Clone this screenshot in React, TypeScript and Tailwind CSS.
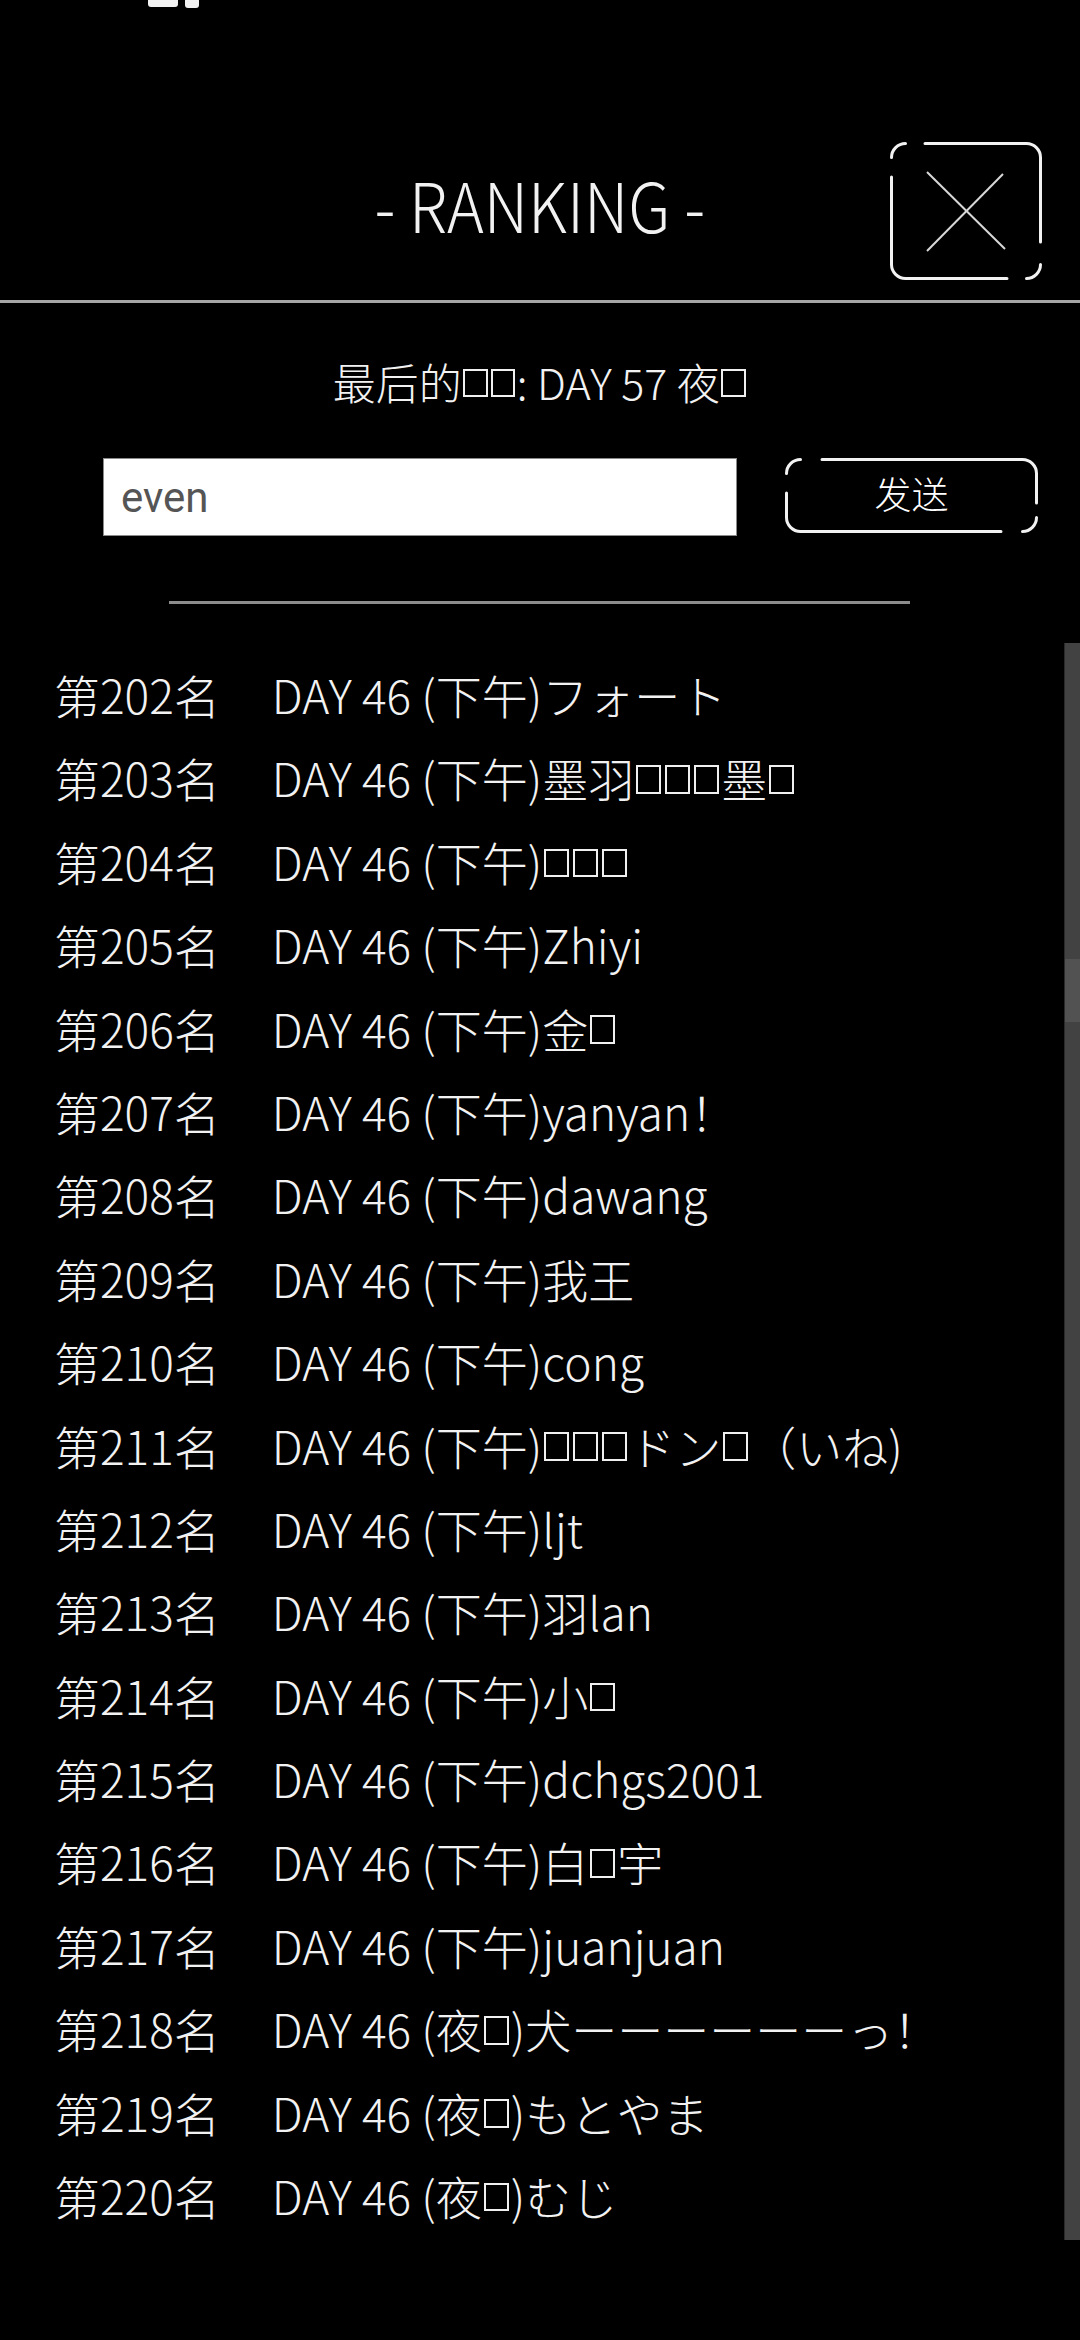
import React from 'react'

type Row = {
  rank: number
  time: string
  name: string
}

const rows: Row[] = [
  { rank: 202, time: '下午', name: 'フォート' },
  { rank: 203, time: '下午', name: '墨羽□□□墨□' },
  { rank: 204, time: '下午', name: '□□□' },
  { rank: 205, time: '下午', name: 'Zhiyi' },
  { rank: 206, time: '下午', name: '金□' },
  { rank: 207, time: '下午', name: 'yanyan！' },
  { rank: 208, time: '下午', name: 'dawang' },
  { rank: 209, time: '下午', name: '我王' },
  { rank: 210, time: '下午', name: 'cong' },
  { rank: 211, time: '下午', name: '□□□ドン□（いね)' },
  { rank: 212, time: '下午', name: 'ljt' },
  { rank: 213, time: '下午', name: '羽lan' },
  { rank: 214, time: '下午', name: '小□' },
  { rank: 215, time: '下午', name: 'dchgs2001' },
  { rank: 216, time: '下午', name: '白□宇' },
  { rank: 217, time: '下午', name: 'juanjuan' },
  { rank: 218, time: '夜□', name: '犬ーーーーーーっ！' },
  { rank: 219, time: '夜□', name: 'もとやま' },
  { rank: 220, time: '夜□', name: 'むじ' },
]

// missing glyph box, the game font has no glyph for these characters
function Tofu({ big = false }: { big?: boolean }) {
  return (
    <span
      className={
        big
          ? 'mx-[0.04em] mb-[0.06em] inline-block h-[0.66em] w-[0.56em] border-2 border-[#f0f0f0] align-baseline'
          : 'mx-[0.04em] mb-[0.08em] inline-block h-[0.62em] w-[0.55em] border-2 border-[#f0f0f0] align-baseline'
      }
    />
  )
}

function withTofu(text: string) {
  const parts = text.split('□')
  return parts.map((part, i) => (
    <React.Fragment key={i}>
      {part}
      {i < parts.length - 1 && <Tofu />}
    </React.Fragment>
  ))
}

function CloseButton() {
  return (
    <button type="button" className="block h-[138px] w-[152px]">
      <svg width="152" height="138" viewBox="0 0 152 138" fill="none">
        <g stroke="#f2f2f2" strokeWidth="3" strokeLinecap="round">
          <path d="M35 1.5 H136.5 A14 14 0 0 1 150.5 15.5 V100" />
          <path d="M117 136.5 H15.5 A14 14 0 0 1 1.5 122.5 V35" />
          <path d="M1.5 15.5 A14 14 0 0 1 15.5 1.5" />
          <path d="M150.5 122.5 A14 14 0 0 1 136.5 136.5" />
        </g>
        <g stroke="#d8d8d8" strokeWidth="2">
          <path d="M37 30 L115 107" />
          <path d="M113 32 L37 109" />
        </g>
      </svg>
    </button>
  )
}

function SendButton() {
  return (
    <button
      type="button"
      className="relative flex h-[75px] w-[253px] items-center justify-center text-[37px] leading-none text-white"
    >
      <svg
        className="absolute inset-0"
        width="253"
        height="75"
        viewBox="0 0 253 75"
        fill="none"
      >
        <g stroke="#f2f2f2" strokeWidth="3" strokeLinecap="round">
          <path d="M37 1.5 H237.5 A14 14 0 0 1 251.5 15.5 V45" />
          <path d="M216 73.5 H15.5 A14 14 0 0 1 1.5 59.5 V35" />
          <path d="M1.5 15.5 A14 14 0 0 1 15.5 1.5" />
          <path d="M251.5 59.5 A14 14 0 0 1 237.5 73.5" />
        </g>
      </svg>
      <span className="relative -mt-[4px]">发送</span>
    </button>
  )
}

export default function App() {
  return (
    <div className="h-[2340px] w-[1080px] overflow-hidden bg-black font-['Noto_Sans_CJK_SC',sans-serif] font-light text-[#f2f2f2]">
      <div className="h-[10px] pl-[148px]">
        <svg width="52" height="10" viewBox="0 0 52 10">
          <rect x="0" y="-4" width="30" height="11" rx="3" fill="#f2f2f2" />
          <rect x="37" y="-4" width="14" height="12" rx="3" fill="#f2f2f2" />
        </svg>
      </div>

      <header className="grid h-[290px] grid-cols-[1fr_auto_1fr]">
        <div />
        <h1 className="pt-[160px] text-[68px] leading-none">
          <span className="inline-block scale-x-[0.92]">- RANKING -</span>
        </h1>
        <div className="justify-self-end pr-[38px] pt-[132px]">
          <CloseButton />
        </div>
      </header>

      <div className="h-[3px] bg-[#a6a6a6]" />

      <p className="mt-[57px] text-center text-[43px] leading-none">
        最后的
        <Tofu big />
        <Tofu big />: DAY 57 夜<Tofu big />
      </p>

      <div className="mt-[55px] flex items-start gap-[48px] pl-[103px]">
        <input
          type="text"
          defaultValue="even"
          className="h-[78px] w-[634px] border border-[#8a8a8a] bg-white px-[17px] font-['Roboto',sans-serif] text-[42px] font-normal text-[#555] outline-none"
        />
        <SendButton />
      </div>

      <div className="ml-[169px] mt-[65px] h-[3px] w-[741px] bg-[#8c8c8c]" />

      <div className="mt-[39px] flex h-[1597px]">
        <div className="flex-1 overflow-hidden pl-[54px]">
          <ul className="mt-[10px]">
            {rows.map((row) => (
              <li
                key={row.rank}
                className="h-[83.4px] whitespace-nowrap text-[46px] leading-[83.4px]"
              >
                第{row.rank}名
                <span className="ml-[52px]">DAY 46 </span>(
                {withTofu(row.time)}){withTofu(row.name)}
              </li>
            ))}
          </ul>
        </div>
        <div className="w-[16px] border-l border-[#2a2a2a] bg-[#424242]">
          <div className="mt-[316px] h-[63px] bg-[#525252]" />
        </div>
      </div>
    </div>
  )
}
